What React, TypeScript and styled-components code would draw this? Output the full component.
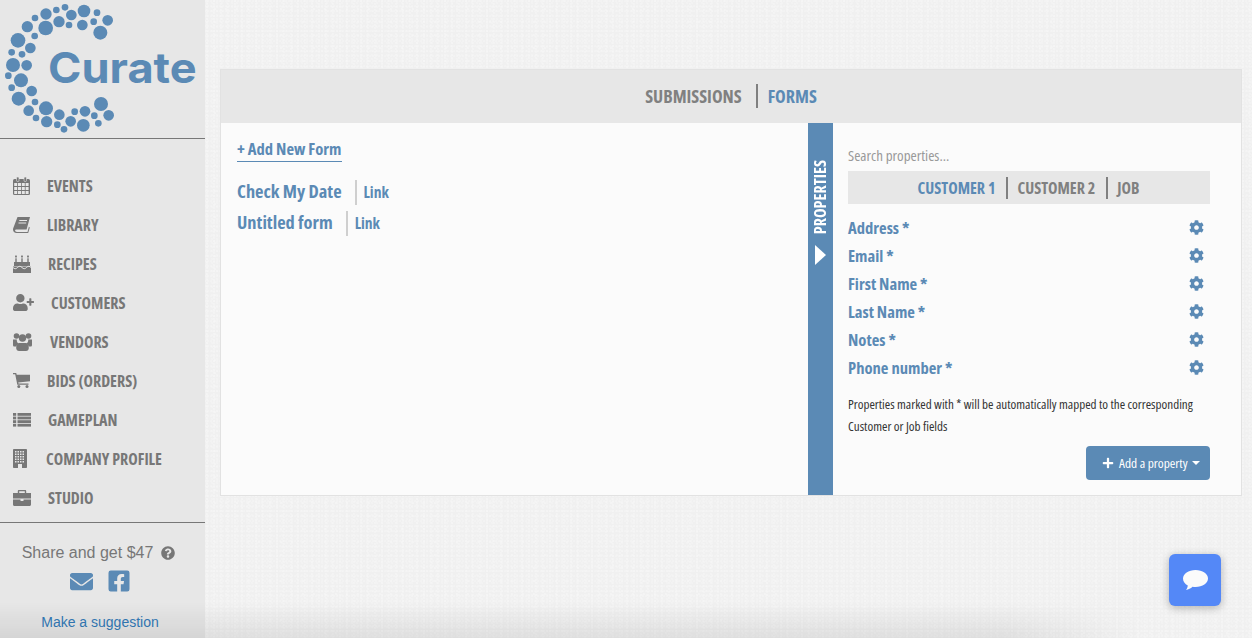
import React from "react";
import styled, { createGlobalStyle } from "styled-components";
import { FaUserPlus, FaEnvelope, FaFacebookSquare, FaQuestionCircle, FaCog, FaPlus } from "react-icons/fa";

const blue = "#5b8ab5";
const grey = "#777777";
const side = "#e7e7e7";
const cond = `"Open Sans", "Liberation Sans", sans-serif`;

const Global = createGlobalStyle`
  html, body { margin: 0; padding: 0; height: 100%; }
  body {
    font-family: ${cond};
    background-color: #f0f0f0;
    background-image:
      radial-gradient(circle at 1px 1px, #f8f8f8 0.5px, transparent 0.8px),
      radial-gradient(circle at 2px 3px, #f7f7f7 0.5px, transparent 0.8px),
      radial-gradient(circle at 4px 1px, #fafafa 0.5px, transparent 0.8px),
      radial-gradient(circle at 6px 9px, #fbfbfb 0.5px, transparent 0.8px);
    background-size: 3px 5px, 5px 4px, 7px 3px, 11px 13px;
  }
`;

const Page = styled.div`
  display: flex;
  width: 1252px;
  height: 638px;
  overflow: hidden;
  position: relative;
`;

const Sidebar = styled.aside`
  width: 205px;
  height: 638px;
  flex: none;
  background: ${side};
  display: flex;
  flex-direction: column;
`;

const LogoBox = styled.div`
  height: 138px;
  border-bottom: 1px solid #777;
  flex: none;
`;

const Nav = styled.nav`
  height: 384px;
  padding-top: 27px;
  box-sizing: border-box;
  border-bottom: 1px solid #777;
  flex: none;
`;

const NavRow = styled.div`
  height: 39px;
  display: flex;
  align-items: center;
  padding-left: 13px;
  color: ${grey};
`;

const NavIcon = styled.span<{ $w: number }>`
  width: ${(p) => p.$w}px;
  flex: none;
  display: flex;
  align-items: center;
`;

const NavLabel = styled.span`
  font-size: 16px;
  font-weight: 700;
  font-stretch: 75%;
  white-space: nowrap;
`;

const Share = styled.div`
  flex: 1;
  display: flex;
  flex-direction: column;
  align-items: center;
  padding: 21px 5px 0 0;
`;

const ShareLine = styled.div`
  font-family: "Liberation Sans", Arial, sans-serif;
  font-size: 16px;
  line-height: 18px;
  color: ${grey};
  display: flex;
  align-items: center;
  gap: 8px;
  margin-left: -3px;
`;

const ShareIcons = styled.div`
  display: flex;
  gap: 14px;
  align-items: center;
  color: ${blue};
  margin: 7px 0 0 1px;
  height: 24px;
`;

const Suggest = styled.a`
  font-family: "Liberation Sans", Arial, sans-serif;
  font-size: 14px;
  color: #337ab7;
  margin-top: 21px;
`;

const Main = styled.main`
  flex: 1;
  padding: 69px 10px 0 15px;
  min-width: 0;
`;

const Card = styled.section`
  height: 427px;
  box-sizing: border-box;
  border: 1px solid #e2e2e2;
  background: #fbfbfb;
  display: flex;
  flex-direction: column;
`;

const Header = styled.header`
  height: 53px;
  flex: none;
  background: ${side};
  display: flex;
  align-items: center;
  justify-content: center;
  padding: 0 0 2px 0;
  box-sizing: border-box;
`;

const Tab = styled.span<{ $active?: boolean; $size?: number }>`
  font-weight: 700;
  font-stretch: 75%;
  font-size: ${(p) => p.$size ?? 18}px;
  color: ${(p) => (p.$active ? blue : "#808080")};
  white-space: nowrap;
`;

const TabSep = styled.span<{ $h: number; $l: number; $r: number }>`
  width: 2px;
  height: ${(p) => p.$h}px;
  margin: 0 ${(p) => p.$r}px 0 ${(p) => p.$l}px;
  background: #808080;
  flex: none;
`;

const Body = styled.div`
  flex: 1;
  display: flex;
  min-height: 0;
`;

const Left = styled.div`
  width: 587px;
  flex: none;
  padding: 15px 16px 0;
  box-sizing: border-box;
`;

const AddForm = styled.a`
  display: inline-block;
  font-size: 16.6px;
  line-height: 20px;
  font-weight: 700;
  font-stretch: 75%;
  color: ${blue};
  border-bottom: 1px solid ${blue};
  padding-bottom: 2px;
`;

const FormRow = styled.div<{ $first?: boolean }>`
  display: flex;
  align-items: center;
  height: 25px;
  margin-top: ${(p) => (p.$first ? 18 : 6)}px;
`;

const FormName = styled.span`
  font-size: 18.4px;
  font-weight: 700;
  font-stretch: 75%;
  color: ${blue};
  margin-bottom: 5px;
`;

const FormSep = styled.span`
  width: 2px;
  height: 25px;
  background: #cfcfcf;
  margin: 0 7px 0 13px;
`;

const FormLink = styled.span`
  font-size: 15.6px;
  font-weight: 700;
  font-stretch: 75%;
  color: ${blue};
  margin-bottom: 1px;
`;

const Strip = styled.div`
  width: 25px;
  flex: none;
  background: ${blue};
  display: flex;
  flex-direction: column;
  align-items: center;
  padding-top: 37px;
  box-sizing: border-box;
`;

const StripLabel = styled.span`
  writing-mode: vertical-rl;
  transform: rotate(180deg);
  font-size: 16.2px;
  font-weight: 700;
  font-stretch: 75%;
  color: #fff;
  line-height: 25px;
`;

const StripArrow = styled.span`
  margin-top: 11px;
  width: 0;
  height: 0;
  border-left: 11px solid #fff;
  border-top: 10px solid transparent;
  border-bottom: 10px solid transparent;
`;

const Right = styled.div`
  flex: 1;
  padding: 21px 31px 0 15px;
  min-width: 0;
  display: flex;
  flex-direction: column;
`;

const Search = styled.div`
  font-size: 15px;
  font-stretch: 75%;
  color: #999;
  line-height: 22px;
`;

const SubTabs = styled.div`
  height: 33px;
  margin-top: 5px;
  background: ${side};
  display: flex;
  align-items: center;
  justify-content: center;
  padding-right: 1px;
`;

const PropList = styled.ul`
  list-style: none;
  margin: 9px 0 0;
  padding: 0;
`;

const Prop = styled.li`
  height: 28px;
  display: flex;
  align-items: center;
  justify-content: space-between;
  padding-right: 6px;
  font-size: 16.6px;
  font-weight: 700;
  font-stretch: 75%;
  color: ${blue};
`;

const Note = styled.p`
  margin: 12px 0 0;
  font-size: 13.1px;
  line-height: 22px;
  font-stretch: 75%;
  color: #333;
`;

const AddWrap = styled.div`
  display: flex;
  justify-content: flex-end;
  margin-top: 9px;
`;

const AddButton = styled.button`
  height: 34px;
  width: 124px;
  border: 0;
  border-radius: 4px;
  background: ${blue};
  color: #fff;
  font-family: ${cond};
  font-size: 13.4px;
  font-stretch: 75%;
  display: flex;
  align-items: center;
  justify-content: flex-start;
  gap: 5px;
  padding: 0 0 0 16px;
`;

const Caret = styled.span`
  width: 0;
  height: 0;
  border-left: 4px solid transparent;
  border-right: 4px solid transparent;
  border-top: 4px solid #fff;
  margin-left: -1px;
`;

const Chat = styled.button`
  position: absolute;
  left: 1169px;
  top: 554px;
  width: 52px;
  height: 52px;
  border: 0;
  padding: 0;
  border-radius: 6px;
  background: #5488f7;
  box-shadow: 0 2px 8px rgba(0, 0, 0, 0.28);
  display: flex;
  align-items: center;
  justify-content: center;
`;

const BottomShade = styled.div`
  position: absolute;
  left: 0;
  bottom: 0;
  width: 1140px;
  height: 36px;
  pointer-events: none;
  background: linear-gradient(to bottom, rgba(0, 0, 0, 0), rgba(0, 0, 0, 0.075));
  mask-image: linear-gradient(to right, #000 88%, transparent 100%);
`;

const circles: [number, number, number][] = [
  [195,22,10],[169,30,10],[252,33,19],[291,38,10],[214,45,16],[138,42,17],[105,54,10],[323,61,16],
  [177,65,17],[281,65,10],[207,75,10],[247,75,16],[82,80,17],[137,84,22],[301,98,21],[104,108,10],
  [54,121,22],[91,144,16],[35,157,10],[66,163,10],[39,195,21],[80,196,16],[25,227,10],[63,241,21],
  [35,263,10],[95,273,16],[56,296,21],[105,306,10],[138,325,21],[86,332,16],[303,312,21],[224,335,10],
  [255,334,16],[178,344,16],[283,347,10],[326,346,16],[108,354,10],[140,365,17],[212,364,16],[172,374,10],
  [250,376,19],[295,370,10],[192,388,10],
];

const Logo = () => (
  <svg width="205" height="138" viewBox="0 0 615 414">
    {circles.map(([x, y, r], i) => <circle key={i} cx={x} cy={y} r={r} fill={blue} />)}
    <text x="144" y="248" fontFamily="Inter, sans-serif" fontWeight="700" fontSize="128" fill={blue} textLength="446" lengthAdjust="spacingAndGlyphs">Curate</text>
  </svg>
);

const CalendarIcon = () => (
  <svg width="17" height="18" viewBox="0 0 17 18" fill="currentColor">
    <rect x="0" y="2" width="17" height="16" rx="1.500" />
    <rect x="3.500" y="0" width="2.500" height="4.500" rx="1" stroke={side} strokeWidth="0.6" />
    <rect x="11" y="0" width="2.500" height="4.500" rx="1" stroke={side} strokeWidth="0.6" />
    {[1.2, 5, 8.800, 12.600].map((x) =>
      [6, 10, 14].map((y) => <rect key={`${x}-${y}`} x={x} y={y} width="3" height="3" fill={side} />)
    )}
  </svg>
);

const BookIcon = () => (
  <svg width="17" height="16" viewBox="0 0 17 16" fill="currentColor">
    <path d="M4.500 0H17l-3.400 12.500H3.800c-1.200 0-1.900.5-1.700 1.300.2.700.9 1.100 1.800 1.100h10.600l1.400-5.100.9.600L15.200 16H3.600C1.500 16 0 14.500 0 12.500c0-.5.100-1 .3-1.500z" />
    <path d="M6.300 3.500h7.700M5.500 6h7.700" stroke={side} strokeWidth="1" />
  </svg>
);

const CakeIcon = () => (
  <svg width="18" height="18" viewBox="0 0 18 18" fill="currentColor">
    <path d="M3 0c1 1 1.200 1.800.7 2.500H2.300C1.800 1.800 2 1 3 0zM9 0c1 1 1.200 1.800.7 2.500H8.300C7.800 1.800 8 1 9 0zM15 0c1 1 1.200 1.800.7 2.500h-1.400c-.5-.7-.3-1.500.7-2.500z" />
    <rect x="2.300" y="3.300" width="1.400" height="4" />
    <rect x="8.300" y="3.300" width="1.400" height="4" />
    <rect x="14.300" y="3.300" width="1.400" height="4" />
    <path d="M1 7h16v4H1zM0 11.500h18V18H0z" />
    <path d="M0 12.500c1.500 1.600 3 1.600 4.500 0s3-1.600 4.500 0 3 1.600 4.500 0 3-1.600 4.500 0" fill="none" stroke={side} strokeWidth="1" />
  </svg>
);

const UsersIcon = () => (
  <svg width="19" height="18" viewBox="0 0 19 18" fill="currentColor">
    <circle cx="3.500" cy="3" r="2.800" />
    <circle cx="15.500" cy="3" r="2.800" />
    <circle cx="9.500" cy="5" r="3.700" />
    <path d="M0 6.500h3.800c-.2 2 .6 3.500 1.800 4.200-1.300.6-2 1.500-2.300 2.800H1.200C.4 13.500 0 12.800 0 12zM19 6.500h-3.800c.2 2-.6 3.500-1.800 4.200 1.300.6 2 1.500 2.300 2.800h2.100c.8 0 1.200-.7 1.200-1.500z" />
    <path d="M6 10h7c2 .5 2.800 2.200 2.800 5 0 2-1.200 3-2.800 3H6c-1.600 0-2.800-1-2.800-3 0-2.800.8-4.500 2.800-5z" />
  </svg>
);

const CartIcon = () => (
  <svg width="17" height="15" viewBox="0 0 17 15" fill="currentColor">
    <path d="M0 0h3.200l.5 1.700H17v6.500L5.200 9.400l.3 1.100H15.500v1.300H4.300L2.200 1.300H0z" />
    <circle cx="5.800" cy="13.500" r="1.500" />
    <circle cx="14" cy="13.500" r="1.500" />
  </svg>
);

const ListIcon = () => (
  <svg width="18" height="14" viewBox="0 0 18 14" fill="currentColor">
    {[0, 3.600, 7.200, 10.800].map((y) => (
      <g key={y}>
        <rect x="0" y={y} width="3.200" height="2.800" />
        <rect x="4.500" y={y} width="13.500" height="2.800" />
      </g>
    ))}
  </svg>
);

const BuildingIcon = () => (
  <svg width="14" height="19" viewBox="0 0 14 19" fill="currentColor">
    <rect width="14" height="19" rx="0.800" />
    {[2, 4.500, 7, 9.500].map((x) =>
      [2, 4.500, 7, 9.500, 12].map((y) => <rect key={`${x}-${y}`} x={x} y={y} width="1.500" height="1.500" fill={side} />)
    )}
    <rect x="5" y="15" width="4" height="4" fill={side} />
  </svg>
);

const BriefcaseIcon = () => (
  <svg width="18" height="16" viewBox="0 0 18 16" fill="currentColor">
    <path d="M6 0h6c.8 0 1.200.5 1.200 1.200V3H18v5.500H0V3h4.800V1.200C4.800.5 5.200 0 6 0zm.2 1.300V3h5.600V1.300z" />
    <path d="M0 9.400h7.500V11h3V9.400H18V14.500c0 .9-.6 1.500-1.500 1.500h-15C.6 16 0 15.400 0 14.500z" />
  </svg>
);

const nav: [React.ReactNode, string, number][] = [
  [<CalendarIcon />, "EVENTS", 34],
  [<BookIcon />, "LIBRARY", 34],
  [<CakeIcon />, "RECIPES", 35],
  [<FaUserPlus size={21} />, "CUSTOMERS", 38],
  [<UsersIcon />, "VENDORS", 37],
  [<CartIcon />, "BIDS (ORDERS)", 34],
  [<ListIcon />, "GAMEPLAN", 35],
  [<BuildingIcon />, "COMPANY PROFILE", 33],
  [<BriefcaseIcon />, "STUDIO", 35],
];

const props = ["Address *", "Email *", "First Name *", "Last Name *", "Notes *", "Phone number *"];

export default function App() {
  return (
    <Page>
      <Global />
      <Sidebar>
        <LogoBox><Logo /></LogoBox>
        <Nav>
          {nav.map(([icon, label, w]) => (
            <NavRow key={label}>
              <NavIcon $w={w}>{icon}</NavIcon>
              <NavLabel>{label}</NavLabel>
            </NavRow>
          ))}
        </Nav>
        <Share>
          <ShareLine>Share and get $47 <FaQuestionCircle size={14} /></ShareLine>
          <ShareIcons><FaEnvelope size={23} /><FaFacebookSquare size={24} /></ShareIcons>
          <Suggest>Make a suggestion</Suggest>
        </Share>
      </Sidebar>
      <Main>
        <Card>
          <Header>
            <Tab>SUBMISSIONS</Tab>
            <TabSep $h={24} $l={14} $r={10} />
            <Tab $active>FORMS</Tab>
          </Header>
          <Body>
            <Left>
              <AddForm>+ Add New Form</AddForm>
              <FormRow $first><FormName>Check My Date</FormName><FormSep /><FormLink>Link</FormLink></FormRow>
              <FormRow><FormName>Untitled form</FormName><FormSep /><FormLink>Link</FormLink></FormRow>
            </Left>
            <Strip>
              <StripLabel>PROPERTIES</StripLabel>
              <StripArrow />
            </Strip>
            <Right>
              <Search>Search properties...</Search>
              <SubTabs>
                <Tab $active $size={16}>CUSTOMER 1</Tab>
                <TabSep $h={22} $l={11} $r={9} />
                <Tab $size={16}>CUSTOMER 2</Tab>
                <TabSep $h={22} $l={11} $r={9} />
                <Tab $size={16}>JOB</Tab>
              </SubTabs>
              <PropList>
                {props.map((p) => (
                  <Prop key={p}>{p}<FaCog size={15} /></Prop>
                ))}
              </PropList>
              <Note>Properties marked with * will be automatically mapped to the corresponding Customer or Job fields</Note>
              <AddWrap>
                <AddButton><FaPlus size={12} /> Add a property <Caret /></AddButton>
              </AddWrap>
            </Right>
          </Body>
        </Card>
      </Main>
      <BottomShade />
      <Chat aria-label="Chat">
        <svg width="27" height="24" viewBox="0 0 27 24">
          <path fill="#fbfbfb" d="M13.500 2C20.500 2 26 5.900 26 10.500S20.500 19 13.500 19c-1 0-2-.1-3-.2C8.700 20.600 6.500 21.500 4 22c1-1.200 1.600-2.600 1.800-4.400C2.900 16.100 1 13.500 1 10.500 1 5.900 6.500 2 13.500 2z" />
        </svg>
      </Chat>
    </Page>
  );
}
